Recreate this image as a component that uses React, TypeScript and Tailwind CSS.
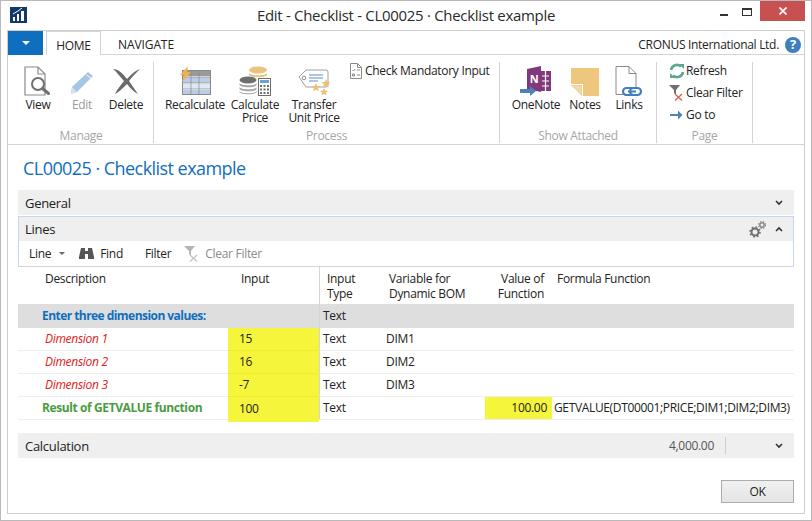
import React from 'react';

const IconView = () => (
  <svg width="28" height="30" viewBox="0 0 28 30" fill="none">
    <path d="M1 1h13l7 7v21H1z" fill="#fff" stroke="#8a8a8a" strokeWidth="1.2" />
    <path d="M14 1v7h7" stroke="#8a8a8a" strokeWidth="1.2" />
    <circle cx="14" cy="18" r="6" fill="#fff" stroke="#707070" strokeWidth="2" />
    <path d="M18.5 22.5l6 5" stroke="#707070" strokeWidth="3" strokeLinecap="round" />
  </svg>
);

const IconEdit = () => (
  <svg width="26" height="26" viewBox="0 0 26 26">
    <path d="M19 2l5 4L8 22l-6 2 1-7z" fill="#a9c5e4" />
    <path d="M2 24l1-7 5 5z" fill="#d4e1f0" />
    <path d="M17.5 5l5 3.5" stroke="#fff" strokeWidth="1" />
  </svg>
);

const IconDelete = () => (
  <svg width="30" height="30" viewBox="0 0 30 30">
    <path d="M2 3c6 0 11 6 14 10 3-3 7-8 13-10-4 4-8 8-11 12 3 4 6 9 9 13-4-2-8-6-11-10-4 4-8 8-12 10 2-5 6-9 9-13C9 11 6 6 2 3z" fill="#6b6b6b" />
  </svg>
);

const IconRecalc = () => (
  <svg width="32" height="30" viewBox="0 0 32 30">
    <rect x="3.5" y="4.5" width="28" height="24" fill="#fff" stroke="#8a8a8a" />
    <rect x="4" y="5" width="27" height="5" fill="#9a9a9a" />
    <rect x="4" y="11" width="27" height="6" fill="#b9cde6" />
    <rect x="4" y="18" width="27" height="5" fill="#dfe8f3" />
    <rect x="4" y="24" width="27" height="4" fill="#b9cde6" />
    <path d="M12 5v23M20 5v23M4 11h27M4 17h27M4 23h27" stroke="#8a8a8a" strokeWidth="0.7" />
    <path d="M9 0L1 9h4l-2 7 9-10H8z" fill="#efb24a" />
  </svg>
);

const IconCalcPrice = () => (
  <svg width="32" height="30" viewBox="0 0 32 30">
    <ellipse cx="19" cy="4" rx="9" ry="3.5" fill="#eac382" />
    <path d="M10 7c1 3 17 3 18 0v2c-1 3-17 3-18 0zM10 11c1 3 17 3 18 0v2H10z" fill="#eac382" />
    <ellipse cx="9" cy="14" rx="8.5" ry="3.5" fill="#6e6e6e" />
    <path d="M.5 17c1 3 16 3 17 0v2c-1 3-16 3-17 0zM.5 21c1 3 16 3 17 0v2c-1 3-16 3-17 0zM.5 25c1 3 16 3 17 0v1c-1 3-16 3-17 0z" fill="#a8a8a8" />
    <rect x="19.5" y="12.5" width="12" height="17" fill="#fff" stroke="#6e6e6e" />
    <rect x="21" y="14" width="9" height="3" fill="#6ea0d4" />
    <path d="M21 19h2v2h-2zM24.500 19h2v2h-2zM28 19h2v2h-2zM21 22.500h2v2h-2zM24.500 22.500h2v2h-2zM28 22.500h2v2h-2zM21 26h2v2h-2zM24.500 26h2v2h-2zM28 26h2v2h-2z" fill="#6e6e6e" />
  </svg>
);

const IconTransfer = () => (
  <svg width="32" height="28" viewBox="0 0 32 28" fill="none">
    <path d="M1 9l7-7h20a2 2 0 012 2v13a2 2 0 01-2 2H8z" fill="#fff" stroke="#a0a0a0" />
    <circle cx="6" cy="10" r="1.8" stroke="#909090" />
    <path d="M11 7h14M11 10h14M11 13h9" stroke="#5b8ec4" />
    <path d="M28 11l1.400 3 3 .3-2.300 2 .7 3-2.800-1.600-2.800 1.600.7-3-2.300-2 3-.3zM18 15l1.400 3 3 .3-2.300 2 .7 3-2.800-1.600-2.800 1.600.7-3-2.300-2 3-.3zM26 20l1.200 2.600 2.800.3-2 1.800.6 2.700L26 26l-2.600 1.400.6-2.700-2-1.800 2.800-.3z" fill="#ecc078" />
  </svg>
);

const IconCheck = () => (
  <svg width="12" height="16" viewBox="0 0 12 16" fill="none">
    <path d="M.5.5h7l4 4v11H.5z" fill="#fff" stroke="#8a8a8a" />
    <path d="M7.500.5v4h4" stroke="#8a8a8a" />
    <path d="M2.500 7l1 1 1.500-2M7 7h3M2.500 11h2v2h-2zM7 12h3" stroke="#707070" strokeWidth="0.8" />
  </svg>
);

const IconOneNote = () => (
  <svg width="32" height="30" viewBox="0 0 32 30">
    <rect x="20" y="5" width="11" height="20" fill="#80397b" />
    <path d="M22 10h7M22 15h7M22 20h7M25.500 5v20" stroke="#fff" strokeWidth="1.200" />
    <path d="M7 3l14-3v26l-14-3z" fill="#80397b" />
    <text x="14" y="16.500" textAnchor="middle" fill="#fff" fontSize="11" fontWeight="700" fontFamily="Open Sans, sans-serif">N</text>
    <path d="M0 23h10v-3l6 5-6 5v-3H0z" fill="#4d82b8" />
  </svg>
);

const IconNotes = () => (
  <svg width="29" height="28" viewBox="0 0 29 28">
    <path d="M0 0h28v28H11L0 17z" fill="#eec67e" />
    <path d="M0 16.500h11.500V28" fill="none" stroke="#fff" />
    <path d="M1 17.500h9.500V27z" fill="#f3d9a6" />
  </svg>
);

const IconLinks = () => (
  <svg width="28" height="30" viewBox="0 0 28 30" fill="none">
    <path d="M1 .5h13l7 7v21H1z" fill="#fff" stroke="#8a8a8a" />
    <path d="M14 .5v7h7" stroke="#8a8a8a" />
    <rect x="8" y="22" width="11" height="7" rx="3.500" fill="#fff" stroke="#3f7fc0" strokeWidth="2.200" />
    <rect x="15" y="22" width="11" height="7" rx="3.500" fill="#fff" stroke="#3f7fc0" strokeWidth="2.200" />
    <path d="M13 25.500h8" stroke="#3f7fc0" strokeWidth="2" />
  </svg>
);

const IconRefresh = () => (
  <svg width="16" height="16" viewBox="0 0 16 16" fill="none">
    <path d="M2 7a6 6 0 0110-3.500M14 9a6 6 0 01-10 3.500" stroke="#5fa68f" strokeWidth="2.600" />
    <path d="M10 1h5v5zM6 15H1v-5z" fill="#5fa68f" />
  </svg>
);

const IconClearFilter = ({ muted = false }: { muted?: boolean }) => (
  <svg width="16" height="16" viewBox="0 0 16 16" fill="none">
    <path d="M0 0h11L7 5v5L5 8V5z" fill={muted ? '#b5b5b5' : '#6e6e6e'} />
    <path d="M6 9l7 6.500M13 9l-7 6.500" stroke={muted ? '#c4c4c4' : '#e0604a'} strokeWidth="1.300" />
  </svg>
);

const IconGoTo = () => (
  <svg width="13" height="10" viewBox="0 0 13 10">
    <path d="M0 4h8V0.500L12.500 5 8 9.500V6H0z" fill="#4d82b8" />
  </svg>
);

const Chevron = ({ up = false }: { up?: boolean }) => (
  <svg width="8" height="6" viewBox="0 0 8 6" fill="none">
    <path d={up ? 'M1 5l3-3 3 3' : 'M1 1l3 3 3-3'} stroke="#333" strokeWidth="1.600" />
  </svg>
);

const Gears = () => (
  <svg width="17" height="17" viewBox="0 0 17 17" fill="none">
    <circle cx="6" cy="11" r="3.500" stroke="#707070" strokeWidth="2" />
    <circle cx="6" cy="11" r="5" stroke="#707070" strokeWidth="1.500" strokeDasharray="1.800 2.100" />
    <circle cx="13" cy="4" r="2.200" stroke="#8c8c8c" strokeWidth="1.500" />
    <circle cx="13" cy="4" r="3.500" stroke="#8c8c8c" strokeWidth="1.200" strokeDasharray="1.400 1.400" />
  </svg>
);

const Binoculars = () => (
  <svg width="15" height="13" viewBox="0 0 15 13">
    <path d="M2 1h4v3h3V1h4l2 9v2H9V7H6v5H0v-2z" fill="#555" />
  </svg>
);

const BigButton = ({ icon, label, width, muted = false }: { icon: React.ReactNode; label: string; width: string; muted?: boolean }) => (
  <div className={`flex flex-col items-center ${width}`}>
    <div className="flex h-[34px] items-end justify-center">{icon}</div>
    <div className={`mt-[2px] whitespace-pre-line text-center leading-[13px] ${muted ? 'text-[#9a9a9a]' : 'text-[#222]'}`}>{label}</div>
  </div>
);

const SmallButton = ({ icon, label }: { icon: React.ReactNode; label: string }) => (
  <div className="flex h-[22px] items-center">
    <div className="flex w-[17px] justify-center">{icon}</div>
    <span className="ml-[1px] text-[#222]">{label}</span>
  </div>
);

const RibbonGroup = ({ title, width, children }: { title: string; width: string; children: React.ReactNode }) => (
  <div className={`flex flex-col border-r border-[#d4d4d4] ${width}`}>
    <div className="flex flex-1">{children}</div>
    <div className="pt-[2px] text-center leading-[14px] text-[#a6a6a6]">{title}</div>
  </div>
);

const rows = [
  { name: 'Dimension 1', input: '15', variable: 'DIM1' },
  { name: 'Dimension 2', input: '16', variable: 'DIM2' },
  { name: 'Dimension 3', input: '-7', variable: 'DIM3' },
];

export default function App() {
  return (
    <div className="flex h-[521px] w-[812px] flex-col overflow-hidden border border-[#b9b9b9] bg-white font-['Open_Sans',sans-serif] text-[12px] tracking-[-0.3px] text-[#222]">
      {/* title bar */}
      <div className="relative flex h-[29px] shrink-0 items-center justify-center text-[15px] text-[#2b2b2b]">
        <svg className="absolute left-[9px] top-[6px]" width="17" height="16" viewBox="0 0 17 16">
          <rect width="17" height="16" fill="#123a68" />
          <path d="M3 10h2v4H3zM7 7h2v7H7zM11 4h3v10h-3z" fill="#fff" />
          <path d="M3 7l5-3 4-3" stroke="#fff" fill="none" />
        </svg>
        <span>Edit - Checklist - CL00025 · Checklist example</span>
        <div className="absolute right-[6px] top-0 flex items-start">
          <div className="mt-[13px] h-[2px] w-[8px] bg-[#333]" />
          <div className="ml-[14px] mt-[7px] h-[8px] w-[10px] border border-t-2 border-[#333]" />
          <div className="ml-[8px] flex h-[20px] w-[45px] items-center justify-center bg-[#c75050]">
            <svg width="8" height="8" viewBox="0 0 8 8" fill="none">
              <path d="M.5.5l7 7M7.500.5l-7 7" stroke="#fff" strokeWidth="1.600" />
            </svg>
          </div>
        </div>
      </div>

      {/* inner frame */}
      <div className="ml-[6px] mr-[6px] flex h-[484px] flex-col border border-[#cfcfcf]">
        {/* tabs */}
        <div className="flex h-[24px] shrink-0 items-stretch">
          <div className="flex w-[35px] items-center justify-center bg-[#106ebe]">
            <div className="h-0 w-0 border-x-[4px] border-t-[4px] border-x-transparent border-t-white" />
          </div>
          <div className="ml-[3px] flex w-[55px] items-center justify-center border-x border-t border-[#d4d4d4] bg-white pt-[4px]">HOME</div>
          <div className="flex w-[90px] items-center justify-center border-b border-[#d4d4d4] pt-[4px] tracking-[-0.1px]">NAVIGATE</div>
          <div className="flex flex-1 items-center justify-end gap-[6px] border-b border-[#d4d4d4] pr-[3px] pt-[4px]">
            <span>CRONUS International Ltd.</span>
            <div className="flex h-[16px] w-[16px] items-center justify-center rounded-full bg-[#3f7fc0] text-[13px] font-bold text-white">?</div>
          </div>
        </div>

        {/* ribbon */}
        <div className="flex h-[90px] shrink-0 border-b border-[#d4d4d4] pb-[1px] pl-[1px] pt-[7px]">
          <RibbonGroup title="Manage" width="w-[145px]">
            <div className="flex pl-[7px]">
              <BigButton icon={<IconView />} label="View" width="w-[44px]" />
              <BigButton icon={<IconEdit />} label="Edit" width="w-[44px]" muted />
              <BigButton icon={<IconDelete />} label="Delete" width="w-[44px]" />
            </div>
          </RibbonGroup>
          <RibbonGroup title="Process" width="w-[346px]">
            <div className="flex pl-[11px]">
              <BigButton icon={<IconRecalc />} label="Recalculate" width="w-[60px]" />
              <BigButton icon={<IconCalcPrice />} label={'Calculate\nPrice'} width="w-[60px]" />
              <BigButton icon={<IconTransfer />} label={'Transfer\nUnit Price'} width="w-[58px]" />
              <div className="ml-[4px] mt-[-2px]">
                <SmallButton icon={<IconCheck />} label="Check Mandatory Input" />
              </div>
            </div>
          </RibbonGroup>
          <RibbonGroup title="Show Attached" width="w-[157px]">
            <div className="flex pl-[12px]">
              <BigButton icon={<IconOneNote />} label="OneNote" width="w-[48px]" />
              <BigButton icon={<IconNotes />} label="Notes" width="w-[50px]" />
              <BigButton icon={<IconLinks />} label="Links" width="w-[38px]" />
            </div>
          </RibbonGroup>
          <RibbonGroup title="Page" width="w-[96px]">
            <div className="mt-[-2px] flex flex-col pl-[11px]">
              <SmallButton icon={<IconRefresh />} label="Refresh" />
              <SmallButton icon={<IconClearFilter />} label="Clear Filter" />
              <SmallButton icon={<IconGoTo />} label="Go to" />
            </div>
          </RibbonGroup>
        </div>

        {/* page body */}
        <div className="flex flex-1 flex-col px-[10px]">
          <div className="ml-[5px] mt-[11px] h-[34px] text-[18px] leading-[24px] tracking-[-0.55px] text-[#106ebe]">CL00025 · Checklist example</div>

          <div className="flex h-[25px] shrink-0 items-center justify-between bg-[#efefef] pl-[7px] pr-[11px] text-[13px]">
            <span className="pt-[2px]">General</span>
            <Chevron />
          </div>

          <div className="mt-[1px] h-[51px] shrink-0 border border-b-[#d4d4d4] border-l-[#c4d6f2] border-r-[#c4d6f2] border-t-[#c4d6f2]">
            <div className="flex h-[24px] items-center justify-between bg-[#efefef] pl-[6px] pr-[10px] text-[13px]">
              <span className="pt-[1px]">Lines</span>
              <div className="flex items-center gap-[9px]">
                <Gears />
                <Chevron up />
              </div>
            </div>
            <div className="flex h-[25px] items-center pl-[10px]">
              <span>Line</span>
              <div className="ml-[8px] h-0 w-0 border-x-[3px] border-t-[3px] border-x-transparent border-t-[#666]" />
              <div className="ml-[14px]"><Binoculars /></div>
              <span className="ml-[6px]">Find</span>
              <span className="ml-[22px]">Filter</span>
              <div className="ml-[13px]"><IconClearFilter muted /></div>
              <span className="ml-[5px] text-[#8a8a8a]">Clear Filter</span>
            </div>
          </div>

          {/* lines table */}
          <div className="grid grid-cols-[210px_91px_64px_102px_67px_242px]">
            <div className="h-[37px] pl-[27px] pt-[3px]">Description</div>
            <div className="pl-[13px] pt-[3px]">Input</div>
            <div className="border-l border-[#d4d4d4] pl-[7px] pt-[4px] leading-[15px]">Input<br />Type</div>
            <div className="pl-[6px] pt-[4px] leading-[15px]">Variable for<br />Dynamic BOM</div>
            <div className="pr-[8px] pt-[4px] text-right leading-[15px]">Value of<br />Function</div>
            <div className="pl-[5px] pt-[3px]">Formula Function</div>

            <div className="col-span-2 flex h-[24px] items-center bg-[#dedede] pl-[24px] font-bold tracking-[-0.55px] text-[#106ebe]">Enter three dimension values:</div>
            <div className="col-span-4 flex items-center border-l border-[#d4d4d4] bg-[#dedede] pl-[3px]">Text</div>

            {rows.map((row) => (
              <React.Fragment key={row.name}>
                <div className="flex h-[23px] items-center border-b border-[#eeeeee] pl-[27px] italic text-[#e02020]">{row.name}</div>
                <div className="flex items-center border-b border-[#f0ea30] bg-[#f5f53c] pl-[11px]">{row.input}</div>
                <div className="flex items-center border-b border-l border-[#eeeeee] border-l-[#d4d4d4] pl-[3px]">Text</div>
                <div className="flex items-center border-b border-[#eeeeee] pl-[3px]">{row.variable}</div>
                <div className="col-span-2 border-b border-[#eeeeee]" />
              </React.Fragment>
            ))}

            <div className="flex h-[23px] items-center border-b border-[#eeeeee] pl-[24px] font-bold tracking-[-0.4px] text-[#4a9c3f]">Result of GETVALUE function</div>
            <div className="-mb-[2px] flex items-center bg-[#f5f53c] pb-[2px] pl-[11px]">100</div>
            <div className="flex items-center border-b border-l border-[#eeeeee] border-l-[#d4d4d4] pl-[3px]">Text</div>
            <div className="border-b border-[#eeeeee]" />
            <div className="flex items-center justify-end border-b border-[#eeeeee] bg-[#f5f53c] pr-[5px]">100.00</div>
            <div className="flex items-center border-b border-[#eeeeee] pl-[2px] tracking-[-0.35px]">GETVALUE(DT00001;PRICE;DIM1;DIM2;DIM3)</div>
          </div>

          <div className="mt-[13px] flex h-[25px] shrink-0 items-center bg-[#efefef] pl-[7px] pr-[11px] text-[13px]">
            <span className="flex-1 pt-[2px]">Calculation</span>
            <span className="text-[12px] text-[#555]">4,000.00</span>
            <div className="ml-[11px] h-[17px] w-px bg-[#cfcfcf]" />
            <div className="ml-[49px] flex"><Chevron /></div>
          </div>

          <div className="mt-[22px] flex justify-end">
            <div className="flex h-[23px] w-[73px] items-center justify-center border border-[#acacac] bg-gradient-to-b from-[#f0f0f0] to-[#e5e5e5]">OK</div>
          </div>
        </div>
      </div>
    </div>
  );
}
